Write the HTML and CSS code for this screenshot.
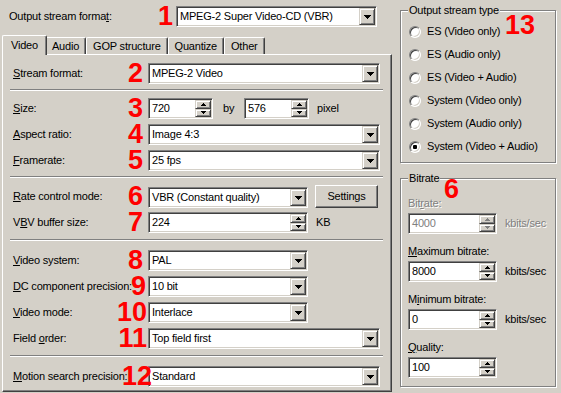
FILE: index.html
```html
<!DOCTYPE html>
<html>
<head>
<meta charset="utf-8">
<title>Output stream settings</title>
<link rel="stylesheet" href="styles.css">
</head>
<body>
<div class="dlg">
  <div class="left">
    <div class="toprow">
      <label class="lbl toplbl">Output stream forma<u>t</u>:<span class="num">1</span></label>
      <div class="combo w-top"><span class="val">MPEG-2 Super Video-CD (VBR)</span><span class="drop"><svg width="7" height="4"><path d="M0 0H7V1H6V2H5V3H4V4H3V3H2V2H1V1H0Z"/></svg></span></div>
    </div>

    <div class="tabs">
      <div class="tab active">Video</div>
      <div class="tab">Audio</div>
      <div class="tab">GOP structure</div>
      <div class="tab">Quantize</div>
      <div class="tab">Other</div>
    </div>

    <div class="panel">
      <div class="row">
        <label class="lbl"><u>S</u>tream format:<span class="num">2</span></label>
        <div class="combo w-full"><span class="val">MPEG-2 Video</span><span class="drop"><svg width="7" height="4"><path d="M0 0H7V1H6V2H5V3H4V4H3V3H2V2H1V1H0Z"/></svg></span></div>
      </div>

      <div class="sep s1"></div>

      <div class="rows">
        <div class="row">
          <label class="lbl"><u>S</u>ize:<span class="num">3</span></label>
          <div class="inline">
            <div class="spin w-small"><span class="val">720</span><span class="btns"><span class="sb"><svg width="5" height="3"><path d="M2 0H3V1H4V2H5V3H0V2H1V1H2Z"/></svg></span><span class="sb"><svg width="5" height="3"><path d="M0 0H5V1H4V2H3V3H2V2H1V1H0Z"/></svg></span></span></div>
            <span class="by">by</span>
            <div class="spin w-small"><span class="val">576</span><span class="btns"><span class="sb"><svg width="5" height="3"><path d="M2 0H3V1H4V2H5V3H0V2H1V1H2Z"/></svg></span><span class="sb"><svg width="5" height="3"><path d="M0 0H5V1H4V2H3V3H2V2H1V1H0Z"/></svg></span></span></div>
            <span class="unit">pixel</span>
          </div>
        </div>
        <div class="row">
          <label class="lbl"><u>A</u>spect ratio:<span class="num">4</span></label>
          <div class="combo w-full"><span class="val">Image 4:3</span><span class="drop"><svg width="7" height="4"><path d="M0 0H7V1H6V2H5V3H4V4H3V3H2V2H1V1H0Z"/></svg></span></div>
        </div>
        <div class="row">
          <label class="lbl"><u>F</u>ramerate:<span class="num">5</span></label>
          <div class="combo w-full"><span class="val">25 fps</span><span class="drop"><svg width="7" height="4"><path d="M0 0H7V1H6V2H5V3H4V4H3V3H2V2H1V1H0Z"/></svg></span></div>
        </div>
      </div>

      <div class="sep s2"></div>

      <div class="rows">
        <div class="row">
          <label class="lbl"><u>R</u>ate control mode:<span class="num">6</span></label>
          <div class="inline">
            <div class="combo w-mid"><span class="val">VBR (Constant quality)</span><span class="drop"><svg width="7" height="4"><path d="M0 0H7V1H6V2H5V3H4V4H3V3H2V2H1V1H0Z"/></svg></span></div>
            <button class="btn">Settings</button>
          </div>
        </div>
        <div class="row">
          <label class="lbl">V<u>B</u>V buffer size:<span class="num">7</span></label>
          <div class="inline">
            <div class="spin w-mid"><span class="val">224</span><span class="btns"><span class="sb"><svg width="5" height="3"><path d="M2 0H3V1H4V2H5V3H0V2H1V1H2Z"/></svg></span><span class="sb"><svg width="5" height="3"><path d="M0 0H5V1H4V2H3V3H2V2H1V1H0Z"/></svg></span></span></div>
            <span class="unit">KB</span>
          </div>
        </div>
      </div>

      <div class="sep s3"></div>

      <div class="rows">
        <div class="row">
          <label class="lbl"><u>V</u>ideo system:<span class="num">8</span></label>
          <div class="combo w-mid"><span class="val">PAL</span><span class="drop"><svg width="7" height="4"><path d="M0 0H7V1H6V2H5V3H4V4H3V3H2V2H1V1H0Z"/></svg></span></div>
        </div>
        <div class="row">
          <label class="lbl"><u>D</u>C component precision:<span class="num r2">9</span></label>
          <div class="combo w-mid"><span class="val">10 bit</span><span class="drop"><svg width="7" height="4"><path d="M0 0H7V1H6V2H5V3H4V4H3V3H2V2H1V1H0Z"/></svg></span></div>
        </div>
        <div class="row">
          <label class="lbl"><u>V</u>ideo mode:<span class="num r1">10</span></label>
          <div class="combo w-mid"><span class="val">Interlace</span><span class="drop"><svg width="7" height="4"><path d="M0 0H7V1H6V2H5V3H4V4H3V3H2V2H1V1H0Z"/></svg></span></div>
        </div>
        <div class="row">
          <label class="lbl">Field <u>o</u>rder:<span class="num r1">11</span></label>
          <div class="combo w-full"><span class="val">Top field first</span><span class="drop"><svg width="7" height="4"><path d="M0 0H7V1H6V2H5V3H4V4H3V3H2V2H1V1H0Z"/></svg></span></div>
        </div>
      </div>

      <div class="sep s3"></div>

      <div class="row">
        <label class="lbl"><u>M</u>otion search precision:<span class="num rm4">12</span></label>
        <div class="combo w-full"><span class="val">Standard</span><span class="drop"><svg width="7" height="4"><path d="M0 0H7V1H6V2H5V3H4V4H3V3H2V2H1V1H0Z"/></svg></span></div>
      </div>
    </div>
  </div>

  <div class="right">
    <div class="group g-type">
      <span class="gtitle">Output stream type</span>
      <span class="num gnum13">13</span>
      <div class="radios">
        <div class="radio"><span class="rb"></span>ES (Video only)</div>
        <div class="radio"><span class="rb"></span>ES (Audio only)</div>
        <div class="radio"><span class="rb"></span>ES (Video + Audio)</div>
        <div class="radio"><span class="rb"></span>System (Video only)</div>
        <div class="radio"><span class="rb"></span>System (Audio only)</div>
        <div class="radio"><span class="rb on"></span>System (Video + Audio)</div>
      </div>
    </div>

    <div class="group g-rate">
      <span class="gtitle">Bitrate</span>
      <span class="num gnum6">6</span>
      <div class="fields">
        <div class="field disabled">
          <label class="flbl">Bit<u>r</u>ate:</label>
          <div class="inline">
            <div class="spin w-rate"><span class="val">4000</span><span class="btns"><span class="sb"><svg width="5" height="3"><path d="M2 0H3V1H4V2H5V3H0V2H1V1H2Z"/></svg></span><span class="sb"><svg width="5" height="3"><path d="M0 0H5V1H4V2H3V3H2V2H1V1H0Z"/></svg></span></span></div>
            <span class="unit">kbits/sec</span>
          </div>
        </div>
        <div class="field">
          <label class="flbl"><u>M</u>aximum bitrate:</label>
          <div class="inline">
            <div class="spin w-rate"><span class="val">8000</span><span class="btns"><span class="sb"><svg width="5" height="3"><path d="M2 0H3V1H4V2H5V3H0V2H1V1H2Z"/></svg></span><span class="sb"><svg width="5" height="3"><path d="M0 0H5V1H4V2H3V3H2V2H1V1H0Z"/></svg></span></span></div>
            <span class="unit">kbits/sec</span>
          </div>
        </div>
        <div class="field">
          <label class="flbl">M<u>i</u>nimum bitrate:</label>
          <div class="inline">
            <div class="spin w-rate"><span class="val">0</span><span class="btns"><span class="sb"><svg width="5" height="3"><path d="M2 0H3V1H4V2H5V3H0V2H1V1H2Z"/></svg></span><span class="sb"><svg width="5" height="3"><path d="M0 0H5V1H4V2H3V3H2V2H1V1H0Z"/></svg></span></span></div>
            <span class="unit">kbits/sec</span>
          </div>
        </div>
        <div class="field">
          <label class="flbl"><u>Q</u>uality:</label>
          <div class="inline">
            <div class="spin w-rate"><span class="val">100</span><span class="btns"><span class="sb"><svg width="5" height="3"><path d="M2 0H3V1H4V2H5V3H0V2H1V1H2Z"/></svg></span><span class="sb"><svg width="5" height="3"><path d="M0 0H5V1H4V2H3V3H2V2H1V1H0Z"/></svg></span></span></div>
          </div>
        </div>
      </div>
    </div>
  </div>
</div>
</body>
</html>
```

FILE: styles.css
```css
* { box-sizing: border-box; }
html, body { margin: 0; padding: 0; }
body {
  background: #d4d0c8;
  width: 561px;
  height: 393px;
  overflow: hidden;
  font-family: "Liberation Sans", Arial, sans-serif;
  font-size: 11px;
  letter-spacing: -0.2px;
  line-height: 13px;
  color: #000;
}
u { text-decoration: underline; text-underline-offset: 1px; }

.dlg { display: flex; padding-top: 6px; }
.left { width: 390px; margin-left: 2px; }
.right { width: 157px; margin-left: 8px; margin-top: 4px; }

/* top row */
.toprow { display: grid; grid-template-columns: 174px 201px; height: 21px; }
.lbl { position: relative; display: block; line-height: 21px; white-space: nowrap; }
.toplbl { padding-left: 7px; }
.toplbl .num { right: 3px; }

/* red annotation numbers */
.num {
  position: absolute;
  top: -3px;
  right: 5px;
  font: bold 27px/27px "Liberation Sans", Arial, sans-serif;
  letter-spacing: 0;
  color: #ff0000;
}
.num.r2 { right: 2px; }
.num.r1 { right: 1px; }
.num.rm4 { right: -4px; }

/* combo box */
.combo, .spin {
  display: flex;
  height: 21px;
  background: #fff;
  border: 1px solid;
  border-color: #808080 #fff #fff #808080;
  box-shadow: inset 1px 1px #404040, inset -1px -1px #d4d0c8;
  padding: 1px;
}
.val { flex: 1; padding-left: 2px; display: flex; align-items: center; white-space: nowrap; overflow: hidden; }
.drop {
  width: 16px; height: 17px;
  background: #d4d0c8;
  border: 1px solid;
  border-color: #d4d0c8 #404040 #404040 #d4d0c8;
  box-shadow: inset 1px 1px #fff, inset -1px -1px #808080;
  display: flex; align-items: center; justify-content: center;
  padding-left: 1px; padding-top: 1px;
}
.drop svg { display: block; fill: #000; }
.w-top { width: 201px; }
.w-full { width: 232px; }
.w-mid { width: 160px; }
.w-small { width: 65px; }
.w-rate { width: 89px; }

/* spin edit */
.btns { width: 16px; display: flex; flex-direction: column; }
.sb {
  flex: 1;
  background: #d4d0c8;
  border: 1px solid;
  border-color: #d4d0c8 #404040 #404040 #d4d0c8;
  box-shadow: inset 1px 1px #fff, inset -1px -1px #808080;
  display: flex; align-items: center; justify-content: center;
}
.sb svg { display: block; fill: #000; }

/* tabs */
.tabs {
  position: relative; z-index: 1;
  display: flex; align-items: flex-start;
  height: 20px; margin-top: 8px; margin-bottom: -1px;
  padding-left: 2px;
}
.tab {
  height: 17px; margin-top: 2px;
  padding: 2px 6px 0 6px;
  background: #d4d0c8;
  border-left: 1px solid #fff; border-top: 1px solid #fff; border-right: 1px solid #404040;
  box-shadow: inset -1px 0 #808080;
  border-radius: 2px 2px 0 0;
  white-space: nowrap;
}
.tab.active {
  height: 20px; margin: 0 -2px; padding: 3px 8px 0 8px;
  position: relative; z-index: 2;
}

/* panel */
.panel {
  height: 338px;
  border: 1px solid;
  border-color: #fff #404040 #404040 #fff;
  box-shadow: inset -1px -1px #808080;
  padding: 8px 8px 0 7px;
}
.rows { display: flex; flex-direction: column; gap: 5px; }
.row { display: grid; grid-template-columns: 135px auto; height: 21px; padding-left: 3px; }
.inline { display: flex; align-items: center; }
.by { margin-left: 10px; width: 21px; }
.unit { margin-left: 8px; }
.btn {
  margin-left: 7px; width: 63px; height: 23px; margin-top: -1px;
  font: inherit; letter-spacing: inherit; color: #000;
  background: #d4d0c8;
  border: 1px solid;
  border-color: #fff #404040 #404040 #fff;
  box-shadow: inset -1px -1px #808080;
  padding: 0;
}

/* separators */
.sep { height: 2px; border-top: 1px solid #808080; border-bottom: 1px solid #fff; }
.sep.s1 { margin: 5px 0 7px; }
.sep.s2 { margin: 5px 0 8px; }
.sep.s3 { margin: 6px 0 9px; }

/* group boxes */
.group {
  position: relative;
  width: 156px;
  border: 1px solid #808080;
  box-shadow: inset 1px 1px #fff, 1px 1px #fff;
}
.g-type { height: 153px; }
.g-rate { height: 209px; margin-top: 15px; }
.gtitle {
  display: table;
  margin: -7px 0 0 7px;
  padding: 0 1px;
  background: #d4d0c8;
  line-height: 13px;
}
.gnum13 { top: 1px; left: 104px; right: auto; }
.gnum6 { top: -3px; left: 43px; right: auto; }

/* radios */
.radios { margin-top: 3px; }
.radio { height: 23px; display: flex; align-items: center; padding-left: 8px; white-space: nowrap; }
.rb {
  width: 12px; height: 12px; margin-right: 6px;
  border-radius: 50%;
  background: #fff;
  border: 1px solid;
  border-color: #808080 #fff #fff #808080;
  box-shadow: inset 1px 1px #404040, inset -1px -1px #d4d0c8;
  display: flex; align-items: center; justify-content: center;
}
.rb.on::after { content: ""; width: 4px; height: 4px; border-radius: 1px; background: #000; }

/* bitrate fields */
.fields { padding: 12px 0 0 7px; }
.field { height: 48px; }
.flbl { display: block; line-height: 13px; margin-bottom: 3px; white-space: nowrap; }
.field.disabled .flbl { color: #808080; text-shadow: 1px 1px #fff; }
.field.disabled .val { color: #808080; }
.field.disabled .sb svg { fill: #808080; }
.field.disabled .unit { color: #808080; text-shadow: 1px 1px #fff; }
```
